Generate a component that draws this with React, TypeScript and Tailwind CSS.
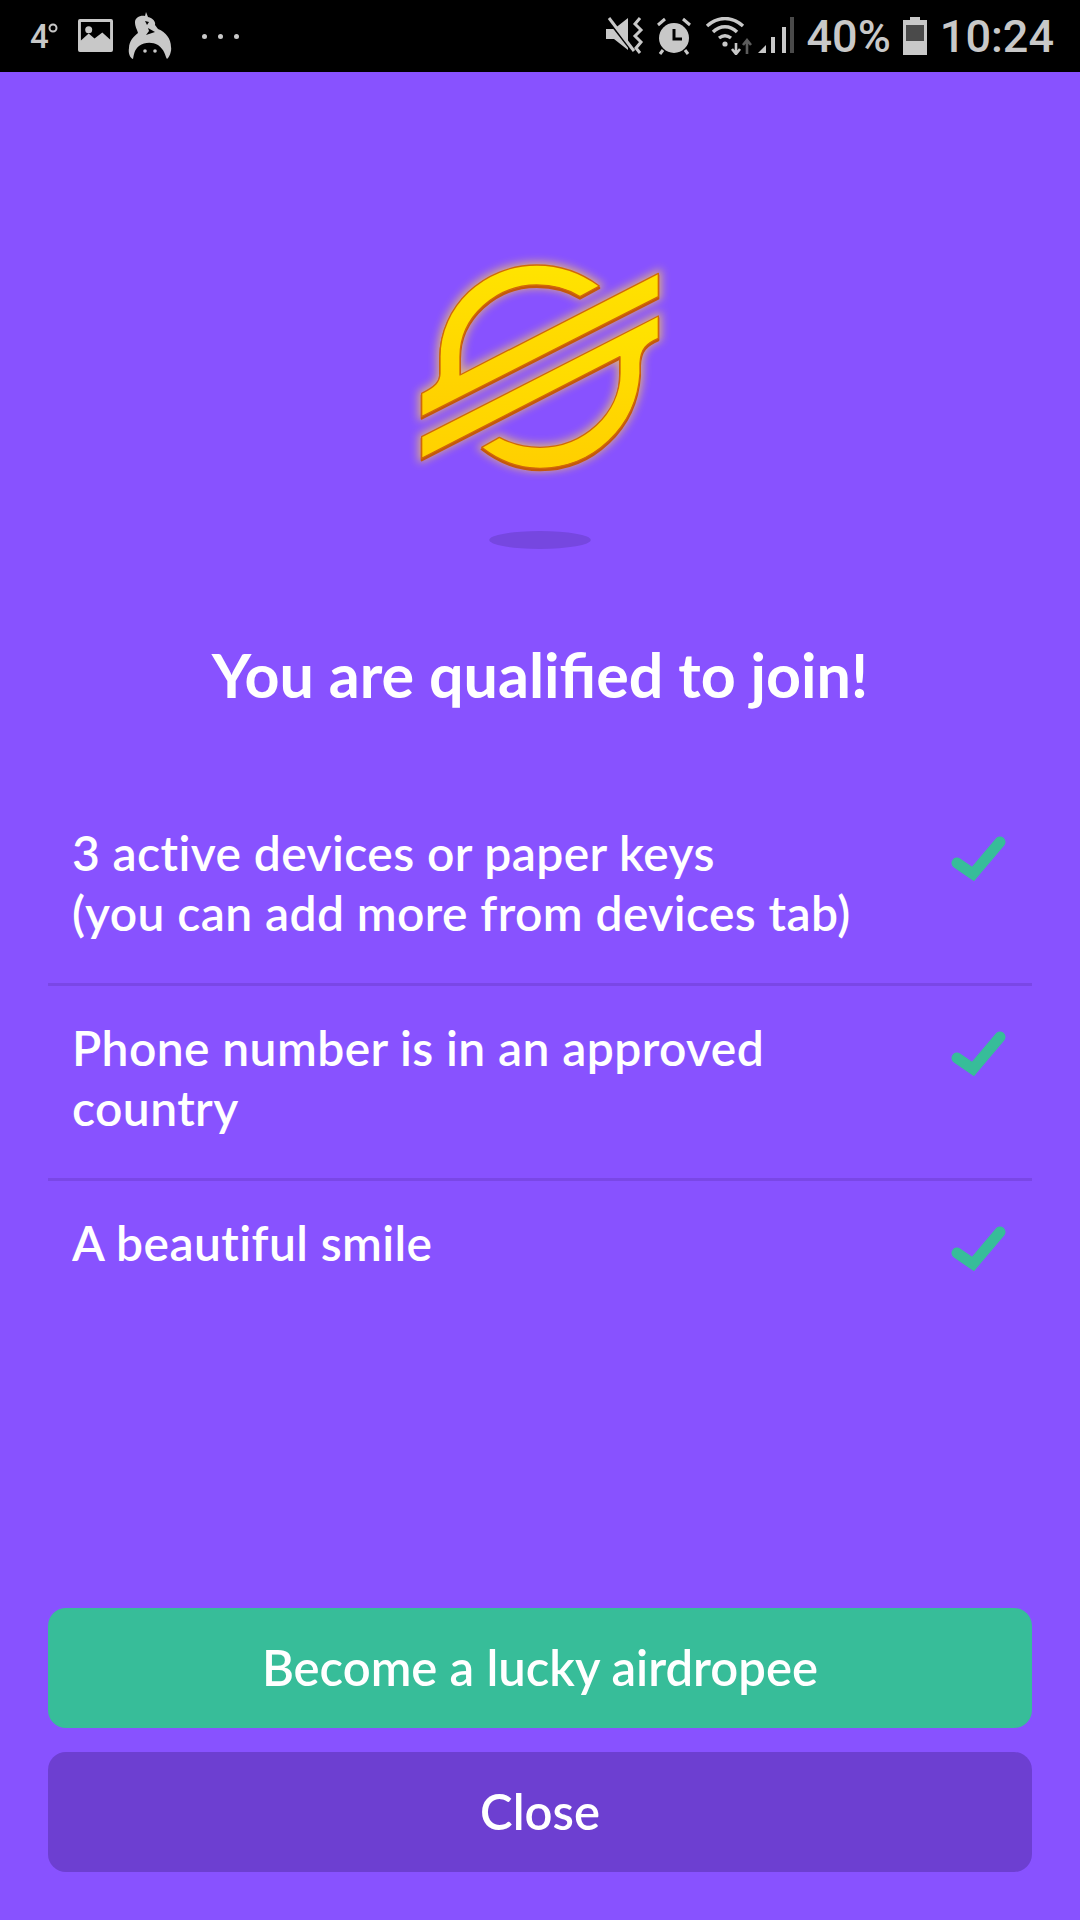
import React from "react";

const font = { fontFamily: '"Lato", "Open Sans", sans-serif' };
const roboto = { fontFamily: "Roboto, sans-serif" };

function Check() {
  return (
    <svg width="60" height="54" viewBox="0 0 60 54" className="shrink-0">
      <path d="M7 28 L23 39 L50 7" fill="none" stroke="#37bd99" strokeWidth="11" strokeLinecap="round" strokeLinejoin="miter" />
    </svg>
  );
}

const A = "M628 138 C570 95 510 75 440 75 C280 75 150 200 150 350 L150 400 C150 425 135 440 95 460 L95 530 L805 170 L805 100 L210 405 L210 350 C210 230 320 135 440 135 C490 135 530 145 570 170 Z";
const B = "M95 590 L805 228 L805 295 C770 310 752 325 750 370 L750 400 C740 560 610 685 450 685 C385 685 330 665 275 622 L328 592 C365 612 405 622 450 622 C580 622 690 520 690 400 L690 350 L95 655 Z";

function Logo() {
  return (
    <svg width="300" height="320" viewBox="0 0 900 960" className="block">
      <defs>
        <linearGradient id="gold" x1="0" y1="0" x2="0" y2="1">
          <stop offset="0" stopColor="#ffe400" />
          <stop offset="1" stopColor="#ffcf00" />
        </linearGradient>
        <filter id="glow" x="-20%" y="-20%" width="140%" height="140%">
          <feGaussianBlur stdDeviation="13" />
        </filter>
      </defs>
      <g filter="url(#glow)" fill="#ffd84a" opacity="0.7" stroke="#ffd84a" strokeWidth="18">
        <path d={A} />
        <path d={B} />
      </g>
      <g fill="#c4570c" stroke="#c4570c" strokeWidth="6" strokeLinejoin="round" transform="translate(0 6)">
        <path d={A} />
        <path d={B} />
      </g>
      <g fill="url(#gold)" stroke="#d0680a" strokeWidth="4" strokeLinejoin="round">
        <path d={A} />
        <path d={B} />
      </g>
      <ellipse cx="450" cy="900" rx="152" ry="27" fill="#7647e0" />
    </svg>
  );
}

function StatusLeft() {
  return (
    <div className="flex items-center">
      <span className="text-[33px] leading-none font-medium text-[#c8c8c8] ml-[30px] w-[18px]" style={roboto}>4</span>
      <svg width="10" height="12" viewBox="0 0 10 12" className="-mt-[14px]">
        <circle cx="5" cy="5" r="3.5" fill="none" stroke="#c8c8c8" strokeWidth="2" />
      </svg>
      <svg width="35" height="35" viewBox="0 0 36 36" className="ml-[20px]">
        <path fillRule="evenodd" fill="#c8c8c8" d="M2 0 H34 Q36 0 36 2 V32 Q36 34 34 34 H2 Q0 34 0 32 V2 Q0 0 2 0 Z M3 3 V22 L11 15 L17 20 L25 14 L33 21 V3 Z" />
        <circle cx="11" cy="11" r="3.6" fill="#c8c8c8" />
      </svg>
      <svg width="44" height="48" viewBox="0 0 44 48" className="ml-[15px]">
        <path fill="#c8c8c8" d="M18 0 L20 5 C25 6 28 10 27 13 L30 17 C38 20 43 27 43 35 C44 39 41 46 39 47 C37 44 37 38 30 33 C24 30 17 30 11 34 C6 38 6 43 5 47 C2 46 0 41 1 36 C1 29 6 24 10 21 C9 17 7 15 7 10 C7 6 12 3 17 4 Z" />
        <path fill="#000" d="M17 9 L21 10 L19 13 Z M20 16 L27 20 L18 23 L21 19 Z" />
        <circle cx="17" cy="39" r="1.8" fill="#c8c8c8" />
        <circle cx="27" cy="39" r="1.8" fill="#c8c8c8" />
      </svg>
      <div className="flex gap-[11px] ml-[30px]">
        <span className="w-[5px] h-[5px] rounded-full bg-[#c8c8c8]" />
        <span className="w-[5px] h-[5px] rounded-full bg-[#c8c8c8]" />
        <span className="w-[5px] h-[5px] rounded-full bg-[#c8c8c8]" />
      </div>
    </div>
  );
}

function StatusRight() {
  return (
    <div className="flex items-center">
      <svg width="38" height="38" viewBox="0 0 38 38">
        <path fill="#c8c8c8" d="M0 12 H8 L22 1 V33 L8 22 H0 Z" />
        <path stroke="#000" strokeWidth="3" d="M0 0 L28 36" />
        <path stroke="#c8c8c8" strokeWidth="3" d="M3 1 L28 34" />
        <path fill="none" stroke="#c8c8c8" strokeWidth="3" d="M34 1 L29 7 L35 13 L29 19 L35 25 L30 31 L34 36" />
      </svg>
      <svg width="36" height="38" viewBox="0 0 36 38" className="ml-[12px]">
        <circle cx="18" cy="21" r="15" fill="#c8c8c8" />
        <path d="M18 12 V22 H26" stroke="#000" strokeWidth="3" fill="none" />
        <path d="M2 8 L9 2 M34 8 L27 2" stroke="#c8c8c8" strokeWidth="3" />
        <path d="M7 33 L4 37 M29 33 L32 37" stroke="#c8c8c8" strokeWidth="3" />
      </svg>
      <svg width="56" height="38" viewBox="0 0 56 38" className="ml-[13px]">
        <path d="M2 9 C13 -1 27 -1 38 9" fill="none" stroke="#c8c8c8" strokeWidth="3.4" />
        <path d="M8 15 C15 8 25 8 32 15" fill="none" stroke="#c8c8c8" strokeWidth="3.4" />
        <path d="M14 21 C18 18 22 18 26 21" fill="none" stroke="#c8c8c8" strokeWidth="3.4" />
        <circle cx="20" cy="27" r="2.6" fill="#c8c8c8" />
        <path d="M31 26 V36 M27 32 L31 37 L35 32" fill="none" stroke="#c8c8c8" strokeWidth="2.6" />
        <path d="M42 37 V24 M38 28 L42 23 L46 28" fill="none" stroke="#5c5c5c" strokeWidth="2.6" />
      </svg>
      <svg width="36" height="38" viewBox="0 0 36 38" className="-ml-[3px]">
        <path d="M0 36 L8 28 V36 Z" fill="#c8c8c8" />
        <rect x="13" y="20" width="4" height="16" fill="#c8c8c8" />
        <rect x="24" y="10" width="4" height="26" fill="#c8c8c8" />
        <rect x="32" y="0" width="4" height="36" fill="#4a4a4a" />
      </svg>
      <span className="text-[45px] leading-none font-medium text-[#c8c8c8] ml-[13px]" style={roboto}>40%</span>
      <svg width="24" height="38" viewBox="0 0 24 38" className="ml-[12px]">
        <path fill="#c8c8c8" d="M7 0 H17 V3 H24 V38 H0 V3 H7 Z" />
        <rect x="3" y="8" width="18" height="16" fill="#4a4a4a" />
      </svg>
      <span className="text-[45px] leading-none font-medium text-[#c8c8c8] ml-[13px] mr-[26px]" style={roboto}>10:24</span>
    </div>
  );
}

function Row({ lines, last }: { lines: string[]; last?: boolean }) {
  return (
    <div className={`flex justify-between h-[195px] pt-[32px] pl-[24px] pr-[22px] ${last ? "" : "border-b-[3px] border-[#7a47e6]"}`}>
      <div className="text-[48px] leading-[60px] font-semibold text-white tracking-[0.4px]">
        {lines.map((l) => (
          <div key={l}>{l}</div>
        ))}
      </div>
      <div className="pt-[12px]">
        <Check />
      </div>
    </div>
  );
}

export default function App() {
  return (
    <div className="w-[1080px] h-[1920px] bg-[#8852ff] flex flex-col overflow-hidden" style={font}>
      <div className="h-[72px] bg-black flex items-center justify-between shrink-0">
        <StatusLeft />
        <StatusRight />
      </div>
      <div className="flex justify-center pt-[168px]">
        <Logo />
      </div>
      <h1 className="text-center text-white font-bold text-[61px] leading-[70px] mt-[80px]">You are qualified to join!</h1>
      <div className="mx-[48px] mt-[81px] flex flex-col">
        <Row lines={["3 active devices or paper keys", "(you can add more from devices tab)"]} />
        <Row lines={["Phone number is in an approved", "country"]} />
        <Row lines={["A beautiful smile"]} last />
      </div>
      <div className="mt-auto mx-[48px] mb-[48px] flex flex-col gap-[24px]">
        <button className="h-[120px] rounded-[18px] bg-[#37bd99] text-white text-[49px] font-semibold">Become a lucky airdropee</button>
        <button className="h-[120px] rounded-[18px] bg-[#6d3fd1] text-white text-[49px] font-semibold">Close</button>
      </div>
    </div>
  );
}
